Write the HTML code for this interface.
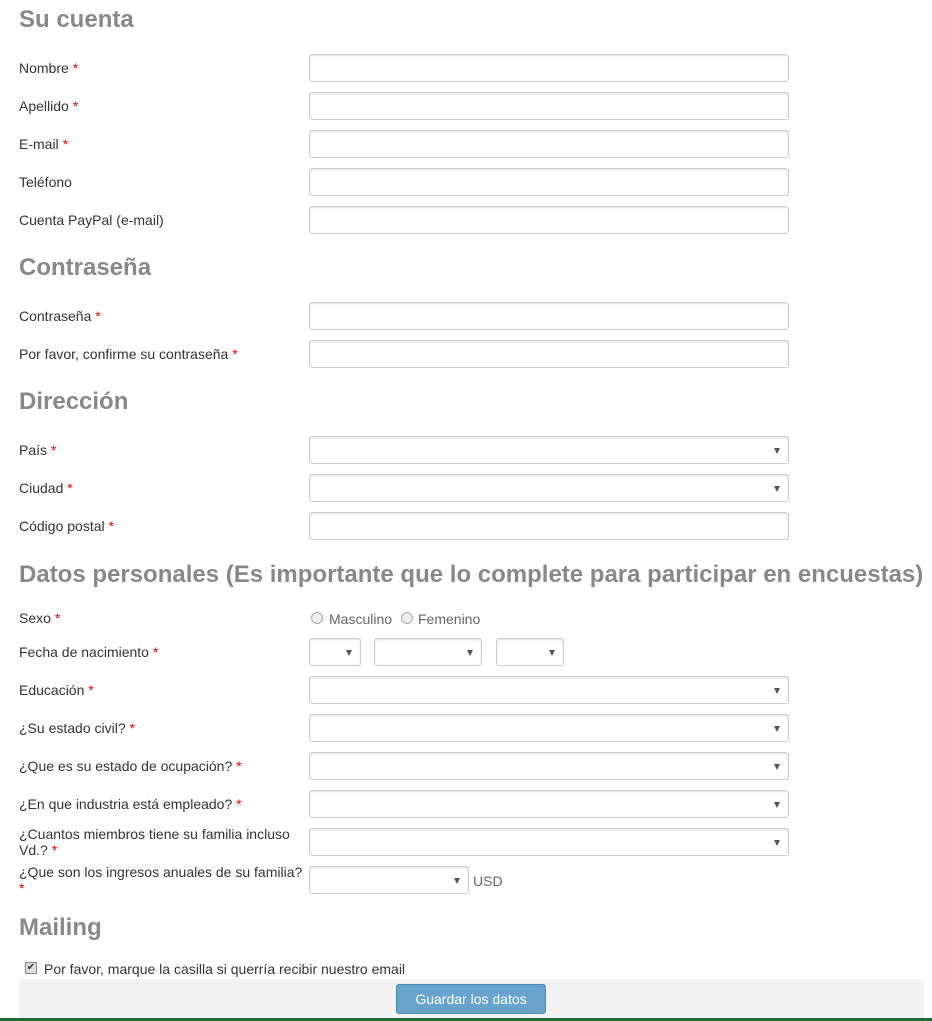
<!DOCTYPE html>
<html><head><meta charset="utf-8"><style>
body{margin:0;width:932px;height:1021px;background:#fff;font-family:"Liberation Sans",Arial,sans-serif;position:relative;overflow:hidden;color:#333}
.h{position:absolute;left:19px;font-size:24px;font-weight:bold;color:#888;line-height:28px;white-space:nowrap}
.l{position:absolute;left:19px;font-size:14px;line-height:16px;color:#333;white-space:nowrap}
.l b{color:#e00;font-weight:normal}
.i{position:absolute;left:309px;width:478px;height:26px;border:1px solid #ccc;border-radius:3px;box-shadow:inset 0 1px 2px rgba(0,0,0,.12);background:#fff}
.s:after{content:"";position:absolute;right:8px;top:11px;border-left:3px solid transparent;border-right:3px solid transparent;border-top:6px solid #555}
</style></head><body>
<div class="h" style="top:6px">Su cuenta</div>
<div class="l" style="top:60px">Nombre <b>*</b></div><div class="i" style="top:54px"></div>
<div class="l" style="top:98px">Apellido <b>*</b></div><div class="i" style="top:92px"></div>
<div class="l" style="top:136px">E-mail <b>*</b></div><div class="i" style="top:130px"></div>
<div class="l" style="top:174px">Teléfono</div><div class="i" style="top:168px"></div>
<div class="l" style="top:212px">Cuenta PayPal (e-mail)</div><div class="i" style="top:206px"></div>
<div class="h" style="top:254px">Contraseña</div>
<div class="l" style="top:308px">Contraseña <b>*</b></div><div class="i" style="top:302px"></div>
<div class="l" style="top:346px">Por favor, confirme su contraseña <b>*</b></div><div class="i" style="top:340px"></div>
<div class="h" style="top:388px">Dirección</div>
<div class="l" style="top:442px">País <b>*</b></div><div class="i s" style="top:436px"></div>
<div class="l" style="top:480px">Ciudad <b>*</b></div><div class="i s" style="top:474px"></div>
<div class="l" style="top:518px">Código postal <b>*</b></div><div class="i" style="top:512px"></div>
<div class="h" style="top:561px">Datos personales (Es importante que lo complete para participar en encuestas)</div>
<div class="l" style="top:610px">Sexo <b>*</b></div>
<div style="position:absolute;left:311px;top:612px;width:10px;height:10px;border:1px solid #aaa;border-radius:50%;background:#eee"></div>
<div class="l" style="left:329px;top:611px;color:#666">Masculino</div>
<div style="position:absolute;left:401px;top:612px;width:10px;height:10px;border:1px solid #aaa;border-radius:50%;background:#eee"></div>
<div class="l" style="left:418px;top:611px;color:#666">Femenino</div>
<div class="l" style="top:644px">Fecha de nacimiento <b>*</b></div>
<div class="i s" style="top:638px;width:50px"></div>
<div class="i s" style="top:638px;left:374px;width:106px"></div>
<div class="i s" style="top:638px;left:496px;width:66px"></div>
<div class="l" style="top:682px">Educación <b>*</b></div><div class="i s" style="top:676px"></div>
<div class="l" style="top:720px">¿Su estado civil? <b>*</b></div><div class="i s" style="top:714px"></div>
<div class="l" style="top:758px">¿Que es su estado de ocupación? <b>*</b></div><div class="i s" style="top:752px"></div>
<div class="l" style="top:796px">¿En que industria está empleado? <b>*</b></div><div class="i s" style="top:790px"></div>
<div class="l" style="top:826px">¿Cuantos miembros tiene su familia incluso<br>Vd.? <b>*</b></div><div class="i s" style="top:828px"></div>
<div class="l" style="top:864px">¿Que son los ingresos anuales de su familia?<br><b>*</b></div><div class="i s" style="top:866px;width:158px"></div>
<div class="l" style="left:473px;top:873px;color:#666">USD</div>
<div class="h" style="top:914px">Mailing</div>
<div style="position:absolute;left:25px;top:962px;width:10px;height:10px;border:1px solid #888;background:#ddd;font-size:10px;line-height:10px;text-align:center">✔</div>
<div class="l" style="left:44px;top:961px">Por favor, marque la casilla si querría recibir nuestro email</div>
<div style="position:absolute;left:19px;top:979px;width:905px;height:39px;background:#f3f3f3"></div>
<div style="position:absolute;left:396px;top:984px;width:148px;height:28px;border:1px solid #4a8ab5;border-radius:3px;background:#67a3cc;color:#fff;font-size:14px;line-height:28px;text-align:center">Guardar los datos</div>
<div style="position:absolute;left:0;top:1018px;width:932px;height:3px;background:#1e6b34"></div>
</body></html>
